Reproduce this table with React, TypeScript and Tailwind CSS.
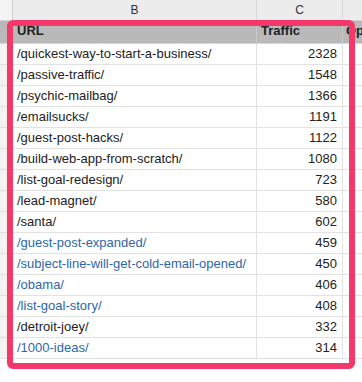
import React from 'react';

const rows: { url: string; traffic: number; link?: boolean }[] = [
  { url: '/quickest-way-to-start-a-business/', traffic: 2328 },
  { url: '/passive-traffic/', traffic: 1548 },
  { url: '/psychic-mailbag/', traffic: 1366 },
  { url: '/emailsucks/', traffic: 1191 },
  { url: '/guest-post-hacks/', traffic: 1122 },
  { url: '/build-web-app-from-scratch/', traffic: 1080 },
  { url: '/list-goal-redesign/', traffic: 723 },
  { url: '/lead-magnet/', traffic: 580 },
  { url: '/santa/', traffic: 602 },
  { url: '/guest-post-expanded/', traffic: 459, link: true },
  { url: '/subject-line-will-get-cold-email-opened/', traffic: 450, link: true },
  { url: '/obama/', traffic: 406, link: true },
  { url: '/list-goal-story/', traffic: 408, link: true },
  { url: '/detroit-joey/', traffic: 332 },
  { url: '/1000-ideas/', traffic: 314, link: true },
];

const cols = 'grid grid-cols-[13px_244px_86px_1fr]';

export default function App() {
  return (
    <div className="relative w-[362px] h-[382px] overflow-hidden bg-white font-['Liberation_Sans',Arial,sans-serif] text-[13px] text-[#222]">
      {/* column letters */}
      <div className={`${cols} h-[21px] bg-[#ececec] border-b border-[#d4d4d4] text-[12px] text-[#333]`}>
        <div className="bg-[#f3f3f3] border-r border-[#d0d0d0]" />
        <div className="flex items-center justify-center border-r border-[#d8d8d8]">B</div>
        <div className="flex items-center justify-center border-r border-[#d8d8d8]">C</div>
        <div />
      </div>

      {/* header row */}
      <div className={`${cols} h-[23px] bg-[#b9b9b9] font-bold border-b border-[#d6d6d6]`}>
        <div className="border-r border-[#c9c9c9]" />
        <div className="flex items-end pb-[3px] pl-[4px] border-r border-[#c9c9c9]">URL</div>
        <div className="flex items-end pb-[3px] pl-[4px] border-r border-[#c9c9c9]">Traffic</div>
        <div className="flex items-end pb-[3px] pl-[3px] whitespace-nowrap overflow-hidden">Opt</div>
      </div>

      {rows.map((r) => (
        <div key={r.url} className={`${cols} h-[21px] border-b border-[#e2e2e2]`}>
          <div className="bg-[#f3f3f3] border-r border-[#d8d8d8]" />
          <div
            className={`flex items-center pl-[4px] whitespace-nowrap overflow-hidden border-r border-[#e2e2e2] ${
              r.link ? 'text-[#2d67ab]' : ''
            }`}
          >
            {r.url}
          </div>
          <div className="flex items-center justify-end pr-[5px] border-r border-[#e2e2e2]">{r.traffic}</div>
          <div />
        </div>
      ))}

      {/* highlight frame */}
      <div className="absolute left-[7px] top-[20px] w-[348px] h-[349px] border-[6px] border-[#f5386c] rounded-[6px] pointer-events-none" />
    </div>
  );
}
